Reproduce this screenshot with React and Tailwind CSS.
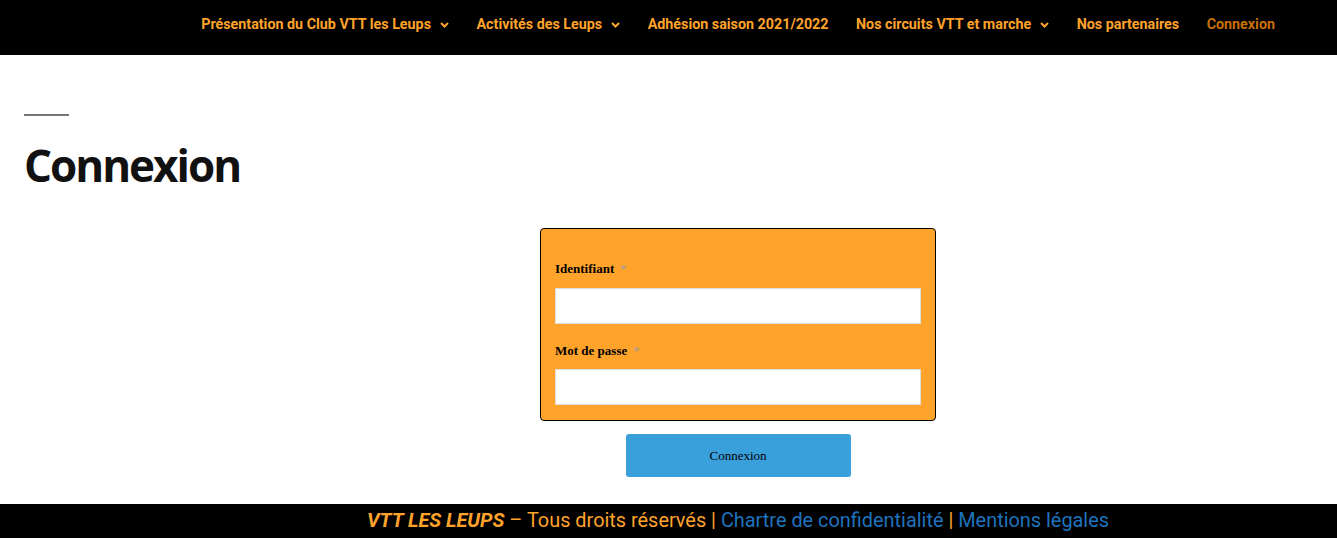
import React from "react";

function Chevron() {
  return (
    <svg width="9" height="6" viewBox="0 0 9 6" className="ml-[9px] mt-[1px]" fill="none">
      <path d="M1 1l3.5 3.5L8 1" stroke="#ffa32b" strokeWidth="2" />
    </svg>
  );
}

const navItems = [
  { label: "Présentation du Club VTT les Leups", chev: true },
  { label: "Activités des Leups", chev: true },
  { label: "Adhésion saison 2021/2022", chev: false },
  { label: "Nos circuits VTT et marche", chev: true },
  { label: "Nos partenaires", chev: false },
];

export default function App() {
  return (
    <div className="w-[1337px] min-h-[538px] bg-white flex flex-col">
      <header className="h-[55px] bg-black flex items-center justify-end pr-[62px] pb-[6px] font-['Roboto',sans-serif] font-bold text-[14.3px]">
        <nav className="flex items-center gap-[27.5px]">
          {navItems.map((it) => (
            <div key={it.label} className="flex items-center text-[#ffa32b]">
              <span>{it.label}</span>
              {it.chev && <Chevron />}
            </div>
          ))}
          <span className="text-[#c96f0a]">Connexion</span>
        </nav>
      </header>

      <main className="h-[449px] flex flex-col">
        <div className="pl-[24px] pt-[59px]">
          <div className="w-[45px] h-[2px] bg-[#777777]" />
          <h1 className="mt-[23px] font-['Open_Sans',sans-serif] font-bold text-[44px] leading-[52px] text-[#111111] tracking-[-2px]">
            Connexion
          </h1>
        </div>

        <div className="ml-[540px] w-[396px] mt-[37px] flex flex-col">
          <div className="bg-[#ffa32b] border border-black rounded-[4px] px-[14px] pt-[30px] pb-[15px] font-['Liberation_Serif',serif]">
            <label className="flex items-center text-[13px] font-bold text-black">
              Identifiant <span className="ml-[6px] text-[#a0a0a0] font-normal">*</span>
            </label>
            <div className="mt-[9px] h-[36px] bg-white border border-[#dddddd]" />
            <label className="mt-[17px] flex items-center text-[13px] font-bold text-black">
              Mot de passe <span className="ml-[6px] text-[#a0a0a0] font-normal">*</span>
            </label>
            <div className="mt-[9px] h-[36px] bg-white border border-[#dddddd]" />
          </div>
          <div className="flex justify-center mt-[13px]">
            <button className="w-[225px] h-[43px] bg-[#3aa0db] rounded-[3px] font-['Liberation_Serif',serif] text-[13px] text-black">
              Connexion
            </button>
          </div>
        </div>
      </main>

      <footer className="h-[34px] bg-black flex items-center justify-center pl-[139px] font-['Roboto',sans-serif] text-[19.9px] leading-none">
        <span className="text-[#ffa32b]">
          <b className="italic font-bold">VTT LES LEUPS</b> – Tous droits réservés |{" "}
        </span>
        <span className="text-[#1e73be] whitespace-pre"> Chartre de confidentialité </span>
        <span className="text-[#ffa32b]">|</span>
        <span className="text-[#1e73be] whitespace-pre"> Mentions légales</span>
      </footer>
    </div>
  );
}
